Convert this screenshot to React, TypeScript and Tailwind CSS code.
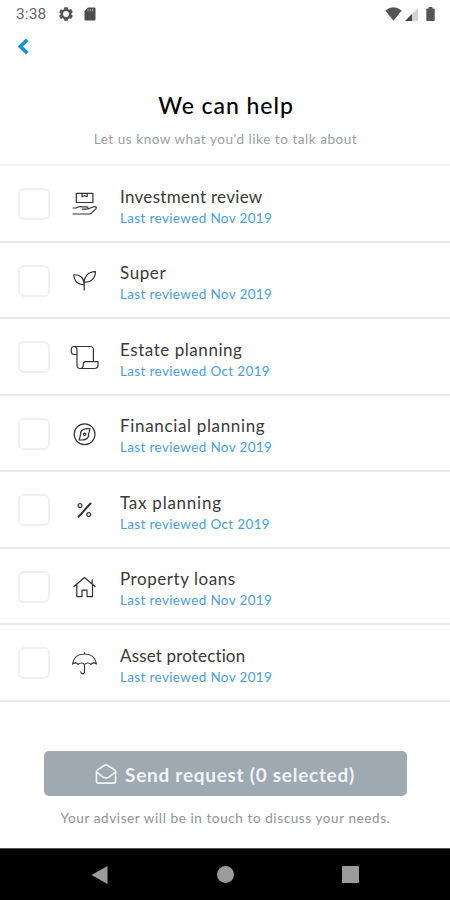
import type { ReactNode } from 'react';

import { clsx } from 'clsx';

interface Topic {
  name: string;
  reviewed: string;
  tracking: string;
  icon: ReactNode;
}

const topics: Topic[] = [
  {
    name: 'Investment review',
    reviewed: 'Nov 2019',
    tracking: 'tracking-[0.3px]',
    icon: (
      <>
        <path d="M7.3 5.3h16.6v9.2H7.3zM13 5.5v3.2l2.6-1 2.6 1V5.500" />
        <path d="M4 20h3.200c2-1.600 4-1.600 6-1.200h4.600c1.700 0 1.700 2.400 0 2.400h-4.500M18.800 21l6-2.300c2-.6 3.400.8 2 2.200l-4.500 4.200c-.8.7-1.500.9-2.500.9H4" />
      </>
    ),
  },
  {
    name: 'Super',
    reviewed: 'Nov 2019',
    tracking: 'tracking-[0.6px]',
    icon: (
      <path d="M15.2 19.5C10 20 5 17 4.8 9.8c6.2-.5 10.4 3.2 10.4 9.7zM15.2 18.5C14.8 12 19 6.5 26.5 6.6c0 6.4-4.5 11.4-11.3 10.4V25" />
    ),
  },
  {
    name: 'Estate planning',
    reviewed: 'Oct 2019',
    tracking: 'tracking-[0.55px]',
    icon: (
      <path d="M4.7 5.5H21c2.2 0 3.4 1 3.4 3v12.2M8 13.5H5.2c-2.2 0-3-1.8-3-4s.6-4 2.5-4C7 5.5 8 6.8 8 9.1V24c0 2.2 1.2 3.5 3.2 3.5h14c2.2 0 3.8-1.6 3.8-4v-2.8H16.2c-1.4 0-2 1.4-2 3.2 0 1.6-.6 3.6-3 3.6" />
    ),
  },
  {
    name: 'Financial planning',
    reviewed: 'Nov 2019',
    tracking: 'tracking-[0.66px]',
    icon: (
      <>
        <circle cx="15.6" cy="16.3" r="10.4" />
        <path d="M21 10.8c-5.2-.8-10 .8-9.300 5.200L10.200 21.800c5.200.8 10-.8 9.300-5.200z" />
        <circle cx="15.6" cy="16.3" r="1.2" />
      </>
    ),
  },
  {
    name: 'Tax planning',
    reviewed: 'Oct 2019',
    tracking: 'tracking-[0.75px]',
    icon: (
      <>
        <path d="M21.5 9.5 9.5 22.800" strokeWidth="2" />
        <circle cx="11" cy="11.5" r="1.900" />
        <circle cx="19.7" cy="20.5" r="1.900" />
      </>
    ),
  },
  {
    name: 'Property loans',
    reviewed: 'Nov 2019',
    tracking: 'tracking-[0.55px]',
    icon: (
      <path d="M5 15.500 15.500 6.500 26 15.500M7.800 13.600v12h5.200v-6.500h5v6.500h5.500v-12M23.200 12.500V8.800" />
    ),
  },
  {
    name: 'Asset protection',
    reviewed: 'Nov 2019',
    tracking: 'tracking-[0.15px]',
    icon: (
      <path d="M15.5 5.500V7M3.500 17C4.500 10.500 9 7 15.500 7s11 3.500 12 10c-1.400-1.600-4.300-1.600-5.600.5-1.500-2-4.800-2-6.400 0-1.500-2-4.800-2-6.300 0C7.900 15.400 5 15.400 3.500 17zM15.500 17.500v7c0 3-3.500 3-3.700.3" />
    ),
  },
];

const StatusBar = () => (
  <div className="flex h-7 items-center justify-between pr-[15px] pl-4 text-[#555]">
    <div className="flex items-center">
      <span className="w-[43px] pt-0.5 font-[Roboto] text-[15.5px] tracking-[0.1px] text-[#666]">
        3:38
      </span>
      <svg className="size-[14px]" viewBox="0 0 24 24" fill="currentColor">
        <path
          fillRule="evenodd"
          d="m9 .5-.6 3.300-2 1.200-3.200-1.200-3 5.200L2.800 11v2L.2 15.200l3 5.200 3.200-1.200 2 1.200.6 3.100h6l.6-3.100 2-1.200 3.200 1.200 3-5.200-2.600-2.200v-2l2.600-2.200-3-5.200-3.200 1.200-2-1.200L15 .5zm3 6.500a5 5 0 1 1 0 10 5 5 0 0 1 0-10z"
        />
      </svg>
      <svg className="ml-[11px] h-[14px] w-[12px]" viewBox="0 0 12 14">
        <path d="M4 .5h6.500q1 0 1 1V12.500q0 1-1 1h-9q-1 0-1-1V4z" fill="#4d4d4d" />
        <path d="M4 2v2.300M6.300 2v2.300M8.600 2v2.300" stroke="#aaa" />
      </svg>
    </div>
    <div className="flex items-center">
      <svg className="h-[14px] w-[17px]" viewBox="0 0 17 14" fill="currentColor">
        <path d="M.3 3.500Q8.500-2.800 16.700 3.500L8.500 13.800z" />
      </svg>
      <svg className="ml-[3px] size-[13px]" viewBox="0 0 14 14">
        <path d="M0 14 14 0v14z" fill="#d4d4d4" />
        <path d="M0 14 7.500 6.500V14z" fill="#444" />
      </svg>
      <svg className="ml-[8px] h-[14px] w-[9px]" viewBox="0 0 9 15" fill="currentColor">
        <path d="M2.500 0h4v1.500H8q1 0 1 1V14q0 1-1 1H1q-1 0-1-1V2.500q0-1 1-1h1.500z" />
      </svg>
    </div>
  </div>
);

const TopicRow = ({ name, reviewed, tracking, icon }: Topic) => (
  <li className="flex h-[76.5px] items-center border-b-2 border-[#e9e9e9] pl-[18px]">
    <button
      type="button"
      role="checkbox"
      aria-checked="false"
      aria-label={name}
      className="mt-0.5 size-8 shrink-0 rounded-md border-2 border-[#f0f0f0]"
    />
    <svg
      className="mt-0.5 ml-[19px] size-8 shrink-0"
      viewBox="0 0 32 32"
      fill="none"
      stroke="#333"
      strokeWidth="1.2"
      strokeLinecap="round"
      strokeLinejoin="round"
    >
      {icon}
    </svg>
    <div className="mt-[8px] ml-[19px] whitespace-nowrap">
      <div className={clsx('text-[17px] leading-[21px] text-[#3a3a3a]', tracking)}>{name}</div>
      <div className="text-[13.5px] leading-[22px] tracking-[0.36px] text-[#4a9fe0]">
        Last reviewed {reviewed}
      </div>
    </div>
  </li>
);

const NavigationBar = () => (
  <div className="flex h-[52px] items-center justify-between border-t border-[#555] bg-black px-[91px]">
    <svg className="h-[18px] w-[17px]" viewBox="0 0 17 18" fill="#9b9b9b">
      <path d="M.5 9 16.500 0v18z" />
    </svg>
    <div className="size-[17px] rounded-full bg-[#9b9b9b]" />
    <div className="size-[17px] rounded-[1px] bg-[#9b9b9b]" />
  </div>
);

export default function App() {
  return (
    <div className="flex h-[900px] w-[450px] flex-col overflow-hidden bg-white font-[Lato,sans-serif]">
      <StatusBar />
      <header className="flex h-[136px] flex-col items-center">
        <button type="button" aria-label="Back" className="mt-[10px] ml-[17px] self-start">
          <svg className="h-[17px] w-[12px]" viewBox="0 0 12 17" fill="none">
            <path d="m10.300 1.800-7 6.700 7 6.700" stroke="#1c93d8" strokeWidth="3.800" />
          </svg>
        </button>
        <h1 className="mt-[34px] pl-0.5 text-[23px] leading-8 font-medium tracking-[0.95px] text-black">
          We can help
        </h1>
        <p className="mt-2 pl-px text-[13.5px] leading-5 tracking-[0.55px] text-[#989fa4]">
          Let us know what you'd like to talk about
        </p>
      </header>
      <ul className="border-t-2 border-[#f5f5f5]">
        {topics.map((topic) => (
          <TopicRow key={topic.name} {...topic} />
        ))}
      </ul>
      <div className="flex flex-1 flex-col items-center pt-[49.5px]">
        <button
          type="button"
          className="flex h-[44.5px] w-[363px] items-center justify-center rounded-[5px] bg-[#9fa9b1] pt-1 text-[19px] font-bold tracking-[0.72px] whitespace-nowrap text-[#f0f4f7]"
        >
          <svg
            className="mr-2 mb-0.5 h-[22px] w-[22px]"
            viewBox="0 0 23 22"
            fill="none"
            stroke="currentColor"
            strokeWidth="1.7"
            strokeLinejoin="round"
          >
            <path d="M1.500 8.500q0-1 .8-1.500L10 1.900q1.500-1 3 0L20.700 7q.8.500.8 1.500V18.500q0 2-2 2h-16q-2 0-2-2zM1.700 9l6.800 5.200q3 2 6 0L21.300 9" />
          </svg>
          Send request (0 selected)
        </button>
        <p className="mt-3 pl-px text-[13.5px] leading-5 tracking-[0.6px] whitespace-nowrap text-[#8e9498]">
          Your adviser will be in touch to discuss your needs.
        </p>
      </div>
      <NavigationBar />
    </div>
  );
}
